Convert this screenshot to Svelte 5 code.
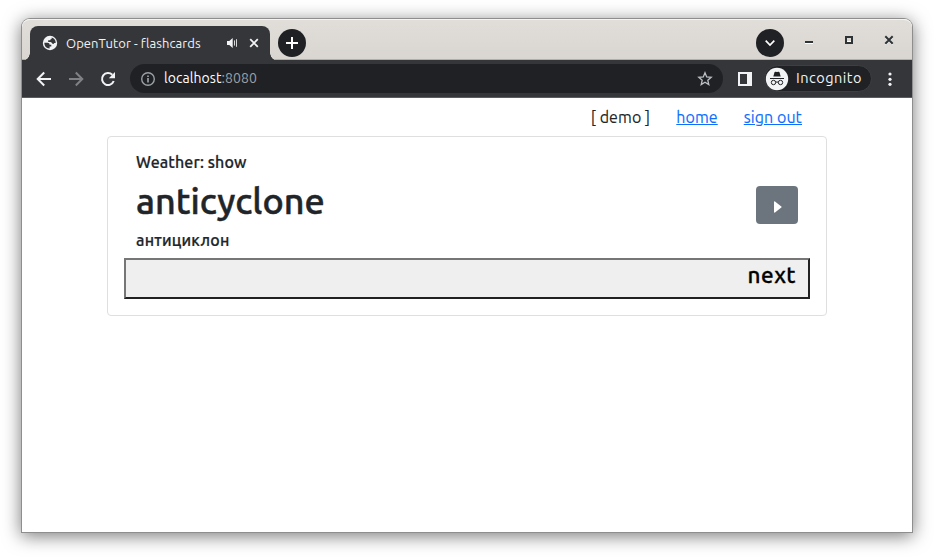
<script>
  let word = $state({ topic: 'Weather: show', term: 'anticyclone', translation: 'антициклон' });
</script>

<div class="desktop">
  <div class="window">
    <header class="titlebar">
      <div class="tab">
        <svg class="globe" width="16" height="16" viewBox="0 0 16 16">
          <circle cx="8" cy="8" r="7.200" fill="#f1f3f4" />
          <path d="M2.300 7.800H5.500Q7.700 7.800 7.700 9.800H9.300V11.500H7.600V13.500Q2.400 13.400 2.300 7.800ZM9.700 2.600Q13.700 4 13.700 8H12.300Q11.500 9.600 10.200 8.600 9.800 6.800 8.200 7H6.200V5.200H8.200Q8.300 3.900 9.700 3.800Z" fill="#35363a" />
        </svg>
        <span class="tab-title">OpenTutor - flashcards</span>
        <svg class="speaker" width="12" height="12" viewBox="0 0 12 12">
          <path d="M1 4h2.300L6.700 1v10L3.300 8H1Z" fill="#f1f3f4" />
          <path d="M8.500 3.400v5.200M10.500 2.200v7.600" stroke="#d6d7d9" stroke-width="1" fill="none" />
        </svg>
        <svg class="tab-close" width="10" height="10" viewBox="0 0 10 10">
          <path d="m1.200 1.200 7.600 7.600M8.800 1.200 1.200 8.800" stroke="#f1f3f4" stroke-width="1.800" />
        </svg>
      </div>
      <div class="round plus">
        <svg width="14" height="14" viewBox="0 0 14 14"><path d="M7 1v12M1 7h12" stroke="#fff" stroke-width="2" /></svg>
      </div>
      <div class="round chevron">
        <svg width="12" height="8" viewBox="0 0 12 8"><path d="m1.700 1.700 4.300 4.300 4.300-4.300" stroke="#fff" stroke-width="1.700" fill="none" /></svg>
      </div>
      <svg class="controls" width="92" height="14" viewBox="0 0 92 14">
        <path d="M1 10.500h8" stroke="#fff" stroke-width="1" />
        <path d="M1 9h8" stroke="#2e3436" stroke-width="2" />
        <path d="M41 8.500h8" stroke="#fff" />
        <path d="M42 4h6v6h-6z" stroke="#2e3436" stroke-width="2" fill="none" />
        <path d="m81.300 4.300 7.400 7.400m0-7.400-7.400 7.400" stroke="#fff" stroke-width="1.500" />
        <path d="m81.300 3.300 7.400 7.400m0-7.400-7.400 7.400" stroke="#2e3436" stroke-width="2" />
      </svg>
    </header>

    <div class="toolbar">
      <svg class="nav" width="88" height="18" viewBox="0 0 88 18">
        <path d="M16 9H3M9.200 2.500 2.700 9l6.500 6.500" stroke="#f1f3f4" stroke-width="2" fill="none" />
        <path d="M34 9h13M40.800 2.500 47.300 9l-6.500 6.500" stroke="#808185" stroke-width="2" fill="none" />
        <path d="M78.700 11A6 6 0 1 1 77.300 4.800" stroke="#f1f3f4" stroke-width="2" fill="none" />
        <path d="M80 2v6.200h-6.200z" fill="#f1f3f4" />
      </svg>
      <div class="omnibox">
        <svg width="16" height="16" viewBox="0 0 16 16">
          <circle cx="8" cy="8" r="6.300" stroke="#9aa0a6" stroke-width="1.400" fill="none" />
          <path d="M8 7v4.400M8 4.400v1.600" stroke="#9aa0a6" stroke-width="1.700" />
        </svg>
        <span class="url">localhost<span class="port">:8080</span></span>
        <svg class="star" width="16" height="16" viewBox="0 0 16 16">
          <path d="m8 1.800 1.700 4.100 4.500.4-3.400 2.900 1 4.400L8 11.300l-3.800 2.300 1-4.400-3.400-2.900 4.500-.4Z" stroke="#bdc1c6" stroke-width="1.300" fill="none" />
        </svg>
      </div>
      <svg class="panel" width="14" height="14" viewBox="0 0 14 14"><path d="M0 0h14v14H0zM2 2v10h7V2z" fill="#f1f3f4" fill-rule="evenodd" /></svg>
      <div class="incognito">
        <svg width="24" height="24" viewBox="0 0 24 24">
          <circle cx="12" cy="12" r="11.200" fill="#f1f3f4" />
          <path d="m8.300 9.500 1.200-4.300q.3-.7 1-.5l1.500.4 1.500-.4q.7-.2 1 .5l1.200 4.300Z" fill="#202124" />
          <path d="M5 11.500h14" stroke="#202124" stroke-width="1" />
          <g stroke="#202124" fill="none"><circle cx="8.500" cy="15.500" r="2.200" /><circle cx="15.500" cy="15.500" r="2.200" /><path d="M10.700 15.300q1.300-.8 2.600 0" /></g>
        </svg>
        <span>Incognito</span>
      </div>
      <svg class="dots" width="4" height="14" viewBox="0 0 4 14"><g fill="#f1f3f4"><circle cx="2" cy="2" r="1.600" /><circle cx="2" cy="7.300" r="1.600" /><circle cx="2" cy="12.300" r="1.600" /></g></svg>
    </div>

    <main>
      <nav class="links">
        <span class="user">[ demo ]</span>
        <a class="home" href="#home">home</a>
        <a class="out" href="#signout">sign out</a>
      </nav>
      <section class="card">
        <div class="topic">{word.topic}</div>
        <div class="word-row">
          <h1>{word.term}</h1>
          <button class="play" aria-label="Play">
            <svg width="8" height="12" viewBox="0 0 8 12"><path d="M0 1q0-1 1-.6L7.300 5.400q.8.600 0 1.200L1 11.600Q0 12 0 11Z" fill="#fff" /></svg>
          </button>
        </div>
        <div class="translation">{word.translation}</div>
        <button class="next"><span>next</span></button>
      </section>
    </main>
  </div>
</div>

<style>
  :global(body) { background: #fff; }
  * { box-sizing: border-box; }
  .desktop {
    width: 934px; height: 557px; overflow: hidden; padding: 19px 22px 25px;
    font-family: Ubuntu, "Noto Sans", sans-serif;
  }
  svg { display: block; flex: none; }
  span, a, h1, .topic, .translation { white-space: nowrap; }
  .window {
    width: 890px; height: 513px; background: #fff; border-radius: 8px 8px 0 0;
    box-shadow: 0 0 0 1px #8e8e8e, 0 3px 18px 1px rgba(0, 0, 0, .53);
  }
  .titlebar {
    height: 41px; display: flex; align-items: flex-start; padding-left: 8px;
    border-radius: 8px 8px 0 0; border-top: 1px solid #f5f4f2; border-bottom: 1px solid #b6aea5;
    background: linear-gradient(#e1deda, #d9d5d0);
  }
  .tab {
    position: relative; width: 240px; height: 35px; margin-top: 6px; padding: 0 11px 1px 12px;
    display: flex; align-items: center; background: #35363a; border-radius: 8px 8px 0 0;
  }
  .tab::before, .tab::after { content: ""; position: absolute; bottom: 0; width: 8px; height: 8px; }
  .tab::before { left: -8px; background: radial-gradient(circle at 0 0, transparent 7.500px, #35363a 8px); }
  .tab::after { right: -8px; background: radial-gradient(circle at 100% 0, transparent 7.500px, #35363a 8px); }
  .tab-title { margin-left: 8px; color: #f1f3f4; font-size: 13px; line-height: 16px; letter-spacing: .08px; }
  .speaker { margin-left: auto; margin-right: 11px; }
  .round { width: 28px; height: 28px; margin-top: 9px; border-radius: 50%; background: #202124; display: grid; place-items: center; }
  .plus { margin-left: 8px; }
  .chevron { margin-left: 450px; }
  .controls { margin: 13px 0 0 20px; }
  .toolbar {
    height: 38px; display: flex; align-items: center; padding-left: 13px;
    background: #35363a; border-bottom: 1px solid #5b5c5f;
  }
  .omnibox {
    width: 593px; height: 29px; margin-left: 7px; padding: 0 10px; display: flex; align-items: center;
    background: #202124; border-radius: 15px;
  }
  .url { margin-left: 8px; padding-bottom: 2px; color: #fff; font-size: 14px; line-height: 18px; letter-spacing: .06px; }
  .port { color: #9aa0a6; }
  .star { margin-left: auto; }
  .panel { margin-left: 15px; }
  .incognito {
    width: 108px; height: 27px; margin-left: 12px; display: flex; align-items: center;
    background: #202124; border: 1px solid #3e3f42; border-radius: 14px; color: #f1f3f4;
  }
  .incognito span { margin-left: 7px; padding-bottom: 2px; font-size: 14.500px; line-height: 18px; letter-spacing: .5px; }
  .dots { margin-left: 16px; }
  main { color: #212529; padding: 0 85px; }
  .links { height: 38px; display: flex; justify-content: flex-end; padding: 7px 25px 0 0; font-size: 16px; line-height: 24px; }
  .links a { color: #0d6efd; text-decoration: underline; margin-left: 26px; }
  .links > * { letter-spacing: .08px; -webkit-text-stroke: .1px currentColor; }
  .card {
    width: 720px; height: 180px; border: 1px solid #dfdfdf; border-radius: 4px; padding: 13px 16px 0;
  }
  .topic, .translation { padding-left: 12px; font-size: 16px; line-height: 24px; font-weight: 500; -webkit-text-stroke: .22px currentColor; letter-spacing: .1px; }
  .translation { letter-spacing: .2px; }
  .word-row { display: flex; justify-content: space-between; padding: 0 12px; height: 54px; }
  h1 { margin: 4px 0 0; font-size: 36px; line-height: 46px; font-weight: 500; -webkit-text-stroke: .5px currentColor; }
  .play {
    width: 42px; height: 38px; margin-top: 12px; padding: 4px 0 0 1px; border: 0; border-radius: 4px;
    background: #6c757d; display: grid; place-items: center;
  }
  .next {
    display: flex; width: 686px; height: 41px; margin-top: 6px; padding: 0 12px;
    justify-content: flex-end; align-items: flex-start; background: #efefef;
    border: 2px solid; border-color: #767676 #212121 #212121 #767676; border-radius: 0;
    font: 500 22.500px/30px Ubuntu, "Noto Sans", sans-serif; color: #000;
    letter-spacing: .45px; -webkit-text-stroke: .3px #000;
  }
</style>
